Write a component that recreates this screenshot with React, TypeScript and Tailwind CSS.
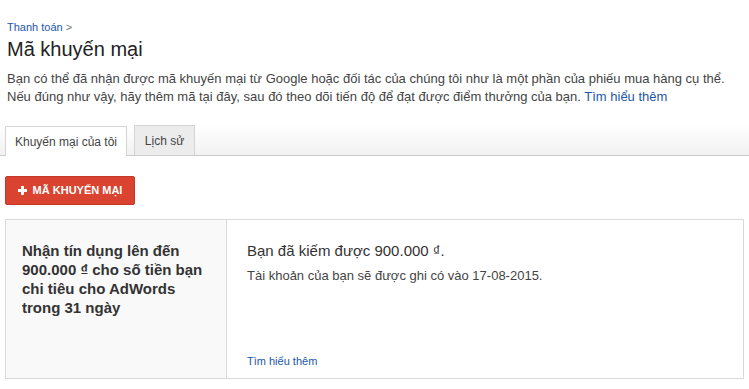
import React from "react";

export default function App() {
  return (
    <div
      className="w-[749px] h-[389px] bg-white overflow-hidden text-[#333]"
      style={{ fontFamily: '"Liberation Sans", Arial, sans-serif' }}
    >
      <div className="pl-[7px] pr-[7px] pt-[21px]">
        <div className="text-[11px] leading-[13px] text-[#777]">
          <span className="text-[#2457a8]">Thanh toán</span> &gt;
        </div>
        <h1 className="text-[20px] leading-[26px] text-[#222] mt-[2px]">Mã khuyến mại</h1>
        <p className="text-[13px] leading-[18px] text-[#444] mt-[8px]">
          Bạn có thể đã nhận được mã khuyến mại từ Google hoặc đối tác của chúng tôi như là một phần của phiếu mua hàng cụ thể.
          <br />
          Nếu đúng như vậy, hãy thêm mã tại đây, sau đó theo dõi tiến độ để đạt được điểm thưởng của bạn.{" "}
          <span className="text-[#2457a8]">Tìm hiểu thêm</span>
        </p>
      </div>

      <div className="mt-[20px] h-[30px] flex items-end border-b border-[#cccccc] bg-gradient-to-b from-white to-[#f1f1f1] pl-[5px] gap-[7px]">
        <div className="h-[30px] w-[122px] bg-white border border-[#d4d4d4] border-b-0 -mb-px flex items-center justify-center text-[12px] text-[#444]">
          Khuyến mại của tôi
        </div>
        <div className="h-[30px] w-[61px] bg-[#ececec] border border-[#d4d4d4] border-b-0 flex items-center justify-center text-[12px] text-[#444]">
          Lịch sử
        </div>
      </div>

      <div className="pl-[5px] mt-[20px]">
        <button className="h-[29px] w-[130px] rounded-[2px] bg-[#d9432f] border border-[#c53727] text-white text-[11px] font-bold flex items-center justify-center gap-[6px]">
          <svg width="9" height="9" viewBox="0 0 9 9">
            <rect x="3" y="0" width="3" height="9" fill="white" />
            <rect x="0" y="3" width="9" height="3" fill="white" />
          </svg>
          <span>MÃ KHUYẾN MẠI</span>
        </button>
      </div>

      <div className="ml-[5px] mt-[14px] w-[739px] h-[160px] border border-[#d9d9d9] flex">
        <div className="w-[221px] shrink-0 bg-[#f9f9f9] border-r border-[#d9d9d9] pl-[16px] pr-[19px] pt-[21px]">
          <p className="text-[15px] leading-[19px] font-bold text-[#333]">
            Nhận tín dụng lên đến 900.000 ₫ cho số tiền bạn chi tiêu cho AdWords trong 31 ngày
          </p>
        </div>
        <div className="flex-1 pl-[20px] pt-[21px] pb-[10px] flex flex-col">
          <p className="text-[15px] leading-[19px] text-[#333]">Bạn đã kiếm được 900.000 ₫.</p>
          <p className="text-[13px] leading-[16px] text-[#444] mt-[8px]">
            Tài khoản của bạn sẽ được ghi có vào 17-08-2015.
          </p>
          <div className="mt-auto text-[11px] leading-[14px] text-[#2457a8]">Tìm hiểu thêm</div>
        </div>
      </div>
    </div>
  );
}
